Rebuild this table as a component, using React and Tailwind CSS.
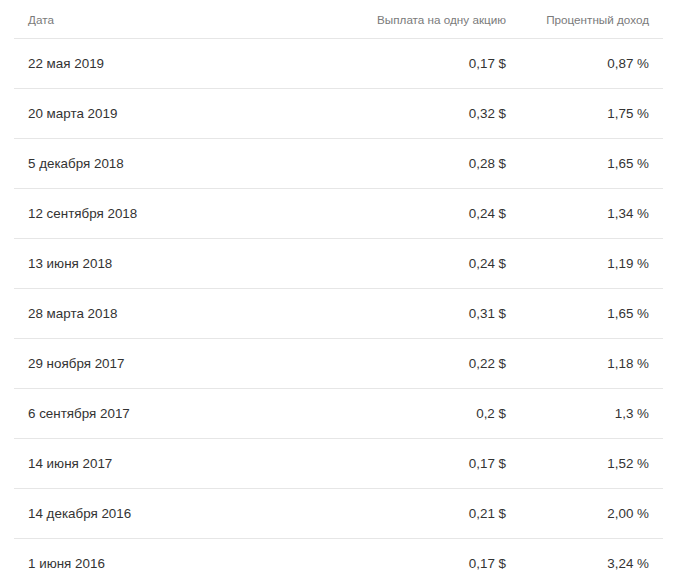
const rows = [
  ["22 мая 2019", "0,17 $", "0,87 %"],
  ["20 марта 2019", "0,32 $", "1,75 %"],
  ["5 декабря 2018", "0,28 $", "1,65 %"],
  ["12 сентября 2018", "0,24 $", "1,34 %"],
  ["13 июня 2018", "0,24 $", "1,19 %"],
  ["28 марта 2018", "0,31 $", "1,65 %"],
  ["29 ноября 2017", "0,22 $", "1,18 %"],
  ["6 сентября 2017", "0,2 $", "1,3 %"],
  ["14 июня 2017", "0,17 $", "1,52 %"],
  ["14 декабря 2016", "0,21 $", "2,00 %"],
  ["1 июня 2016", "0,17 $", "3,24 %"],
];

export default function App() {
  return (
    <div className="bg-white w-[676px] h-[585px] overflow-hidden" style={{ fontFamily: '"Liberation Sans", Arial, sans-serif' }}>
      <div className="ml-[14px] w-[649px]">
        <div className="grid grid-cols-[1fr_200px_143px] items-center h-[39px] pt-px px-[14px] text-[11.7px] text-[#7a7a7a] border-b border-[#e6e6e6]">
          <div>Дата</div>
          <div className="text-right">Выплата на одну акцию</div>
          <div className="text-right">Процентный доход</div>
        </div>
        {rows.map((r, i) => (
          <div key={i} className="grid grid-cols-[1fr_200px_143px] items-center h-[50px] pt-px px-[14px] text-[13.4px] text-[#333333] border-b border-[#e6e6e6]">
            <div>{r[0]}</div>
            <div className="text-right">{r[1]}</div>
            <div className="text-right">{r[2]}</div>
          </div>
        ))}
      </div>
    </div>
  );
}
